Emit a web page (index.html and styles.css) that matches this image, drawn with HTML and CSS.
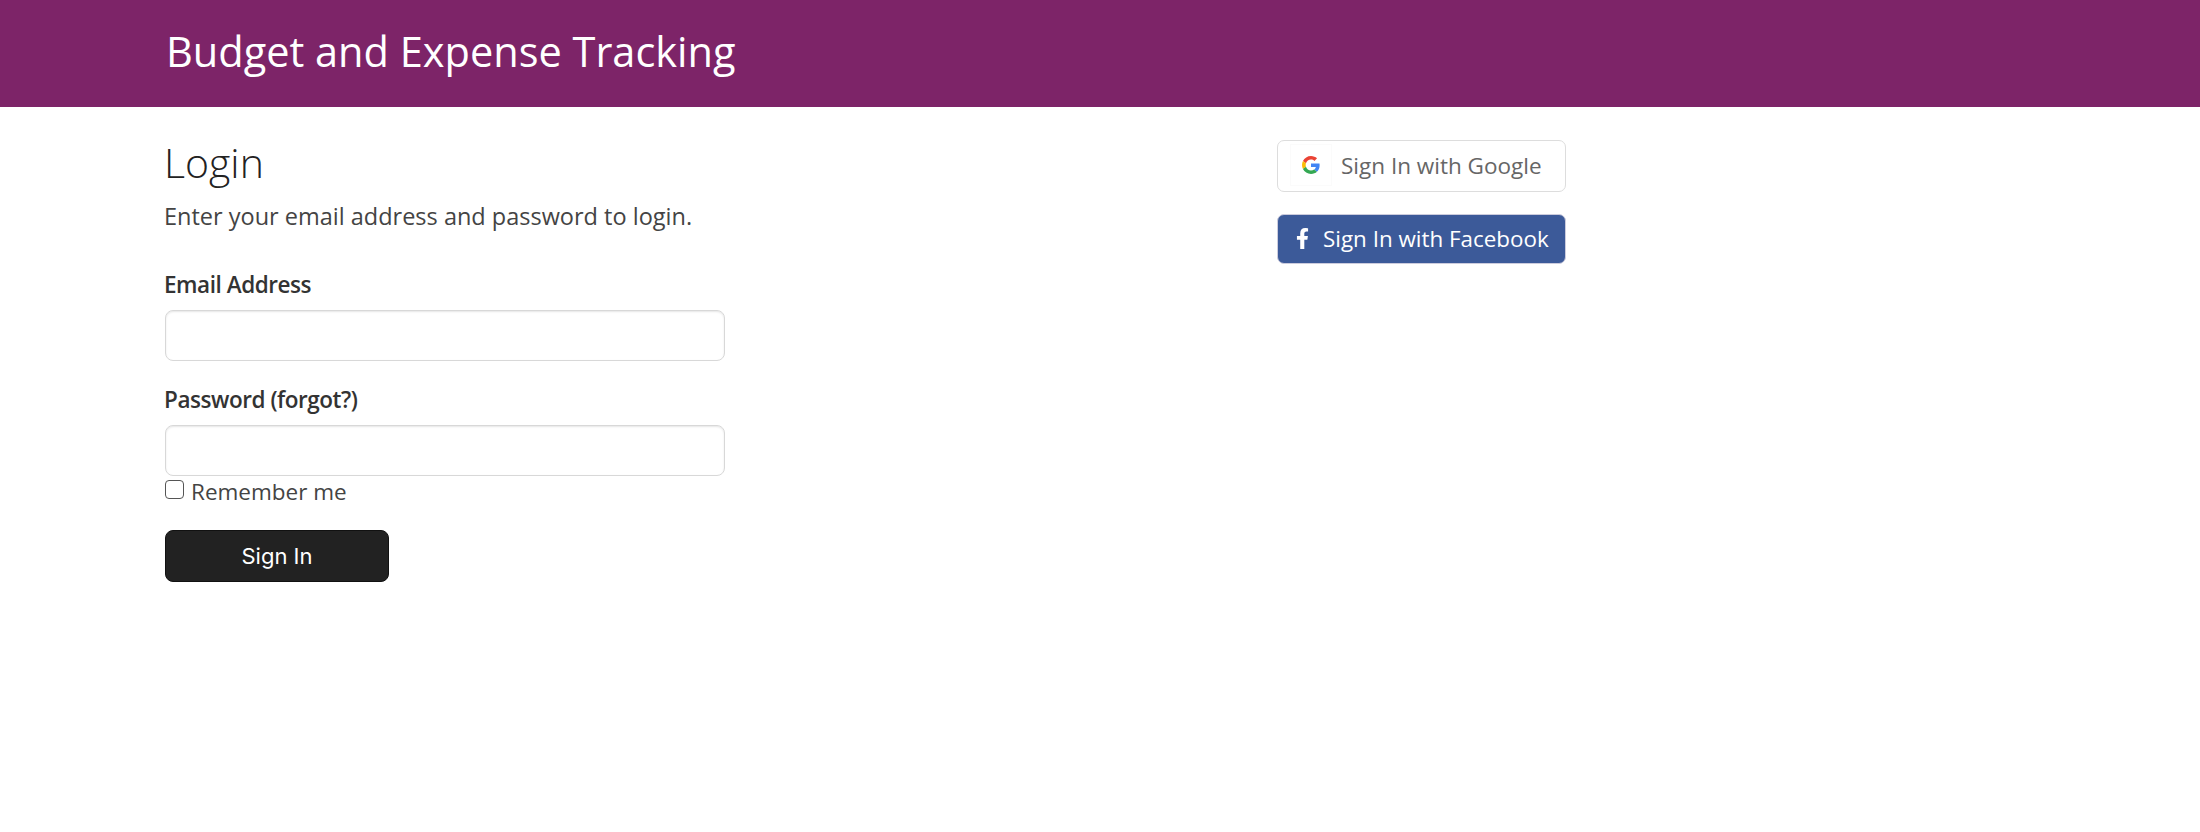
FILE: index.html
```html
<!DOCTYPE html>
<html lang="en">
<head>
<meta charset="utf-8">
<title>Login</title>
<link rel="stylesheet" href="styles.css">
</head>
<body>
<header class="topbar"><div class="brand">Budget and Expense Tracking</div></header>
<main class="content">
  <section class="login">
    <h1 class="title">Login</h1>
    <p class="lead">Enter your email address and password to login.</p>
    <form class="form">
      <label class="label" for="email">Email Address</label>
      <input class="input" id="email" type="email">
      <label class="label label-second" for="password">Password (forgot?)</label>
      <input class="input" id="password" type="password">
      <label class="remember"><input class="check" type="checkbox"><span>Remember me</span></label>
      <button class="submit" type="button">Sign In</button>
    </form>
  </section>
  <aside class="social">
    <a class="social-btn google">
      <span class="g-box"><svg class="g-icon" viewBox="0 0 48 48" width="18" height="18"><path fill="#EA4335" d="M24 9.5c3.54 0 6.71 1.22 9.21 3.6l6.85-6.85C35.9 2.38 30.47 0 24 0 14.62 0 6.51 5.38 2.56 13.22l7.98 6.19C12.43 13.72 17.74 9.5 24 9.5z"/><path fill="#4285F4" d="M46.98 24.55c0-1.57-.15-3.09-.38-4.55H24v9.02h12.94c-.58 2.96-2.26 5.48-4.78 7.18l7.73 6c4.51-4.18 7.09-10.36 7.09-17.65z"/><path fill="#FBBC05" d="M10.53 28.59c-.48-1.45-.76-2.99-.76-4.59s.27-3.14.76-4.59l-7.98-6.19C.92 16.46 0 20.12 0 24c0 3.88.92 7.54 2.56 10.78l7.97-6.19z"/><path fill="#34A853" d="M24 48c6.48 0 11.93-2.13 15.89-5.81l-7.73-6c-2.15 1.45-4.92 2.3-8.16 2.3-6.26 0-11.57-4.22-13.47-9.91l-7.98 6.19C6.51 42.62 14.62 48 24 48z"/></svg></span>
      <span>Sign In with Google</span>
    </a>
    <a class="social-btn facebook">
      <svg class="f-icon" viewBox="0 0 320 512" width="13" height="21"><path fill="#fff" d="M279.14 288l14.22-92.66h-88.91v-60.13c0-25.35 12.42-50.06 52.24-50.06h40.42V6.26S260.43 0 225.36 0c-73.22 0-121.08 44.38-121.08 124.72v70.62H22.89V288h81.39v224h100.17V288z"/></svg>
      <span>Sign In with Facebook</span>
    </a>
  </aside>
</main>
</body>
</html>
```
FILE: styles.css
```css
* { box-sizing: border-box; }
html, body { margin: 0; padding: 0; background: #fff; }
body { font-family: "Open Sans", sans-serif; color: #333; font-size: 22.5px; }
.topbar { height: 107px; background: #7d2468; display: flex; align-items: center; padding: 0 0 4px 166px; }
.brand { color: #fff; font-size: 41.5px; line-height: 1; }
.content { display: flex; padding-left: 164px; }
.login { width: 1113px; }
.title { margin: 30px 0 0; font-size: 41px; line-height: 50px; font-weight: 300; color: #222; }
.lead { margin: 14px 0 0; font-size: 23.5px; line-height: 30px; color: #444; }
.form { display: flex; flex-direction: column; align-items: flex-start; margin-top: 39px; }
.label { font-size: 22.5px; line-height: 30px; font-weight: 600; color: #333; margin-bottom: 10px; letter-spacing: -0.45px; }
.label-second { margin-top: 24px; }
.input { width: 560px; height: 51px; margin: 0 0 0 1px; border: 1px solid #d8d8d8; border-radius: 8px; background: #fff; box-shadow: inset 0 1px 2px rgba(0,0,0,.1); }
.remember { display: flex; align-items: flex-start; font-size: 22.5px; line-height: 30px; color: #444; padding: 1px 0 0 1px; }
.check { appearance: none; width: 19px; height: 19px; margin: 3px 7px 0 0; border: 1.5px solid #555; border-radius: 4px; background: #fff; }
.submit { margin: 23px 0 0 1px; width: 224px; height: 52px; background: #222; color: #fff; border: 1px solid #111; border-radius: 8px; font-family: Inter, sans-serif; font-size: 22px; }
.social { display: flex; flex-direction: column; width: 289px; padding-top: 33px; gap: 22px; }
.social-btn { display: flex; align-items: center; border-radius: 7px; font-size: 22.5px; padding-bottom: 2px; }
.google { height: 52px; border: 1px solid #ddd; color: #666; padding-left: 12px; gap: 9px; }
.g-box { display: flex; align-items: center; justify-content: center; width: 42px; height: 42px; border: 1px solid #fbfbfb; }
.facebook { height: 50px; background: #3c5a99; border: 1px solid #ccd; color: #fff; padding-left: 18px; gap: 14px; font-size: 22.4px; }
```
